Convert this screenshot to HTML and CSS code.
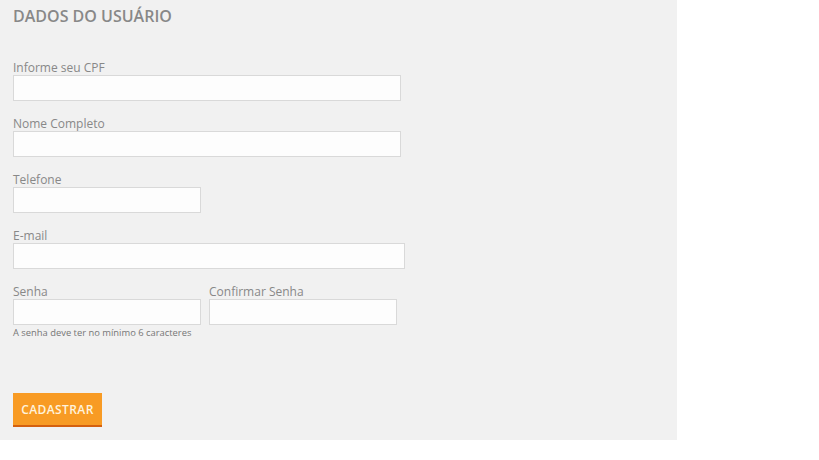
FILE: index.html
```html
<!DOCTYPE html>
<html lang="pt-BR">
<head>
<meta charset="UTF-8">
<meta name="viewport" content="width=device-width, initial-scale=1.0">
<title>Dados do Usuário</title>
<link rel="stylesheet" href="styles.css">
</head>
<body>

<div class="panel">
  <h2 class="title">DADOS DO USUÁRIO</h2>

  <form class="form">
    <div class="field">
      <label for="cpf">Informe seu CPF</label>
      <input type="text" id="cpf" class="input wide">
    </div>

    <div class="field">
      <label for="nome">Nome Completo</label>
      <input type="text" id="nome" class="input wide">
    </div>

    <div class="field">
      <label for="telefone">Telefone</label>
      <input type="text" id="telefone" class="input short">
    </div>

    <div class="field">
      <label for="email">E-mail</label>
      <input type="text" id="email" class="input wider">
    </div>

    <div class="row">
      <div class="field">
        <label for="senha">Senha</label>
        <input type="password" id="senha" class="input short">
      </div>
      <div class="field">
        <label for="confirma">Confirmar Senha</label>
        <input type="password" id="confirma" class="input short">
      </div>
    </div>
    <p class="hint">A senha deve ter no mínimo 6 caracteres</p>

    <button type="button" class="btn">CADASTRAR</button>
  </form>
</div>

</body>
</html>
```

FILE: styles.css
```css
body {
  margin: 0;
  font-family: 'Open Sans', sans-serif;
  color: #888;
  background-color: #fff;
}
.panel {
  width: 664px;
  height: 440px;
  padding-left: 13px;
  background-color: #f1f1f1;
  box-sizing: content-box;
}
.title {
  margin: 0;
  padding-top: 5px;
  font-size: 16px;
  line-height: 22px;
  font-weight: 600;
  color: #888;
}
.form {
  padding-top: 34px;
}
.field {
  display: flex;
  flex-direction: column;
  margin-bottom: 16px;
}
.field label {
  font-size: 12px;
  line-height: 14px;
  color: #888;
}
.input {
  height: 26px;
  box-sizing: border-box;
  border: 1px solid #d9d9d9;
  background-color: #fdfdfd;
  margin: 0;
  padding: 0 6px;
}
.wide {
  width: 388px;
}
.wider {
  width: 392px;
}
.short {
  width: 188px;
}
.row {
  display: flex;
  gap: 8px;
}
.row .field {
  margin-bottom: 0;
}
.hint {
  margin: 2px 0 0;
  font-size: 9.4px;
  line-height: 12px;
  color: #777;
}
.btn {
  margin-top: 54px;
  width: 89px;
  height: 34px;
  border: none;
  border-bottom: 2px solid #d4600f;
  background-color: #f89b24;
  color: #fff3dc;
  font-family: 'Open Sans', sans-serif;
  font-size: 12px;
  font-weight: 600;
  letter-spacing: 0.4px;
  cursor: pointer;
}
```
